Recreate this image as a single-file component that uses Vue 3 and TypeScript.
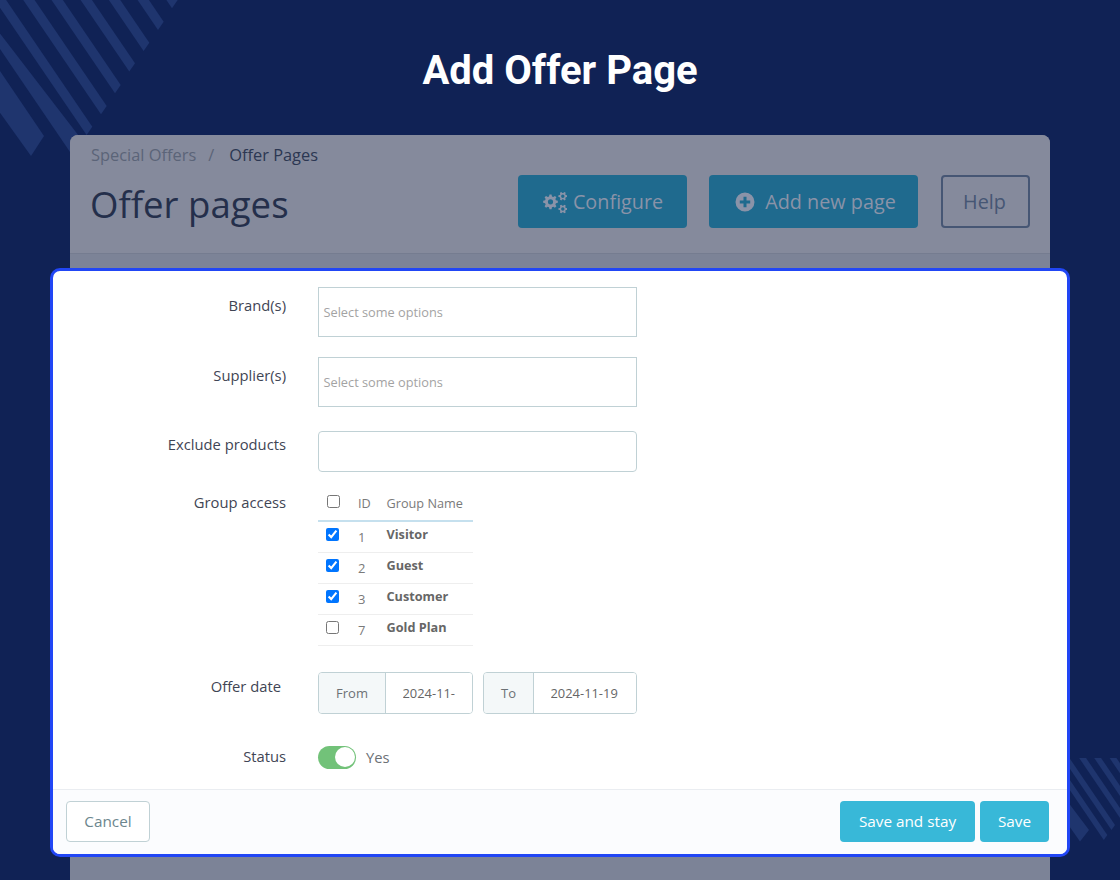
<script setup lang="ts">
interface Group { id: number; name: string; checked: boolean }

const groups: Group[] = [
  { id: 1, name: 'Visitor', checked: true },
  { id: 2, name: 'Guest', checked: true },
  { id: 3, name: 'Customer', checked: true },
  { id: 7, name: 'Gold Plan', checked: false },
]

function stripe(cx: number, cy: number, tx: number, ty: number, top: number): string {
  const s = 1.47
  const rx = cx - (cy - top) / s
  const lx = tx - (ty - top) / s
  return `${lx},${top} ${rx},${top} ${cx},${cy} ${tx},${ty}`
}

const topCorners: [number, number][] = [
  [177.7, 0], [163.7, 21.7], [149.3, 42.7], [135, 63.3], [120.7, 85], [106.7, 106], [92.3, 126.7],
]
const lowCorners: [number, number][] = [
  [1107.3, 835], [1115, 825], [1123.8, 813.5], [1131.7, 803], [1140, 792.6],
]
const stripes: string[] = [
  ...topCorners.map(([x, y]) => stripe(x, y, x - 5.7, y + 8.3, -2)),
  '-2,31 -2,46 70,152 82,140',
  '-2,68 -2,110 31,156 44,136',
  ...lowCorners.map(([x, y]) => stripe(x, y, x - 3.5, y + 5, 758)),
  '1060,791.5 1089,830 1080,841.5 1060,813',
]

function gear(cx: number, cy: number, ro: number, ri: number, hole: number, teeth: number): string {
  const pts: string[] = []
  const step = (Math.PI * 2) / teeth
  for (let i = 0; i < teeth; i++) {
    const a = i * step
    const cs: [number, number][] = [
      [ri, a - step * 0.34], [ro, a - step * 0.18], [ro, a + step * 0.18], [ri, a + step * 0.34],
    ]
    for (const [r, t] of cs) {
      pts.push(`${(cx + r * Math.cos(t)).toFixed(2)} ${(cy + r * Math.sin(t)).toFixed(2)}`)
    }
  }
  const ring = `M${pts.join('L')}Z`
  return `${ring}M${cx - hole} ${cy}a${hole} ${hole} 0 1 0 ${hole * 2} 0a${hole} ${hole} 0 1 0 ${-hole * 2} 0Z`
}

const cogs = [gear(7.5, 10.8, 7.4, 5.6, 2.6, 8), gear(19.8, 5.2, 4.5, 3.2, 1.7, 6), gear(19.8, 18, 4.5, 3.2, 1.7, 6)].join('')
</script>

<template>
  <div class="page">
    <svg class="stripes" width="1120" height="880" viewBox="0 0 1120 880" aria-hidden="true">
      <polygon v-for="(p, i) in stripes" :key="i" :points="p" class="stripe" />
    </svg>

    <h1 class="hero">Add Offer Page</h1>

    <div class="card">
      <div class="card-head">
        <div class="crumbs">
          <span class="crumb">Special Offers</span>
          <span class="sep">/</span>
          <span class="crumb-now">Offer Pages</span>
        </div>
        <div class="head-row">
          <h2 class="title">Offer pages</h2>
          <div class="actions">
            <button class="btn-dim btn-config" type="button">
              <svg class="cog" width="24" height="24" viewBox="0 0 24 24"><path :d="cogs" fill="currentColor" fill-rule="evenodd" /></svg>
              Configure
            </button>
            <button class="btn-dim btn-add" type="button">
              <svg class="plus" width="20" height="20" viewBox="0 0 20 20">
                <path d="M10 .5a9.5 9.5 0 1 0 0 19 9.5 9.5 0 0 0 0-19ZM8.5 4.8h3v3.7h3.7v3h-3.7v3.7h-3v-3.7H4.8v-3h3.7Z" fill="currentColor" fill-rule="evenodd" />
              </svg>
              Add new page
            </button>
            <button class="btn-help" type="button">Help</button>
          </div>
        </div>
      </div>
    </div>

    <div class="modal">
      <div class="body">
        <div class="row row-brand">
          <label class="label">Brand(s)</label>
          <div class="chosen">Select some options</div>
        </div>
        <div class="row row-supplier">
          <label class="label">Supplier(s)</label>
          <div class="chosen">Select some options</div>
        </div>
        <div class="row row-exclude">
          <label class="label">Exclude products</label>
          <input class="text-input" type="text" />
        </div>
        <div class="row row-group">
          <label class="label">Group access</label>
          <table class="groups">
            <thead>
              <tr>
                <th class="c-check"><input class="head-check" type="checkbox" /></th>
                <th class="c-id">ID</th>
                <th class="c-name">Group Name</th>
              </tr>
            </thead>
            <tbody>
              <tr v-for="g in groups" :key="g.id">
                <td class="c-check"><input type="checkbox" :checked="g.checked" /></td>
                <td class="c-id id-cell">{{ g.id }}</td>
                <td class="c-name name-cell">{{ g.name }}</td>
              </tr>
            </tbody>
          </table>
        </div>
        <div class="row row-date">
          <label class="label"><span class="date-label">Offer date</span></label>
          <div class="dates">
            <div class="date-group date-from">
              <span class="addon">From</span>
              <input class="date-input" type="text" value="2024-11-19" readonly />
            </div>
            <div class="date-group date-to">
              <span class="addon">To</span>
              <input class="date-input" type="text" value="2024-11-19" readonly />
            </div>
          </div>
        </div>
        <div class="row row-status">
          <label class="label">Status</label>
          <div class="status">
            <span class="switch"><span class="knob"></span></span>
            <span class="yes">Yes</span>
          </div>
        </div>
      </div>
      <div class="footer">
        <button class="btn-cancel" type="button">Cancel</button>
        <div class="save-group">
          <button class="btn-save btn-stay" type="button">Save and stay</button>
          <button class="btn-save btn-only" type="button">Save</button>
        </div>
      </div>
    </div>
  </div>
</template>

<style scoped>
.page {
  position: relative;
  height: 880px;
  overflow: hidden;
  background: #102255;
  font-family: "Open Sans", sans-serif;
}
.stripes { position: absolute; inset: 0; }
.stripe { fill: #1f356e; }

.hero {
  position: relative;
  margin: 0;
  height: 135px;
  padding-top: 45px;
  box-sizing: border-box;
  text-align: center;
  font-family: Roboto, sans-serif;
  font-weight: 700;
  font-size: 40px;
  line-height: 52px;
  color: #fff;
}

.card {
  position: relative;
  margin: 0 70px;
  height: 745px;
  background: #7c8397;
  border-radius: 8px 8px 0 0;
  overflow: hidden;
}
.card-head {
  height: 119px;
  box-sizing: border-box;
  padding: 9px 20px 0 21px;
  background: #858a9c;
  border-bottom: 1px solid #757c90;
}
.crumbs {
  display: flex;
  gap: 12px;
  font-size: 16.4px;
  line-height: 22px;
}
.crumb { color: #5b6478; }
.sep { color: #5b6478; margin-right: 3px; }
.crumb-now { color: #2c3752; }
.head-row {
  display: flex;
  justify-content: space-between;
  margin-top: 9px;
}
.title {
  margin: 0 0 0 -1px;
  font-weight: 400;
  font-size: 36.6px;
  line-height: 48px;
  color: #242f4b;
  padding-top: 5px;
}
.actions { display: flex; gap: 22px; }
.btn-dim, .btn-help {
  height: 53px;
  border-radius: 4px;
  font-family: inherit;
  font-size: 19.8px;
  font-weight: 500;
  display: flex;
  align-items: center;
  justify-content: center;
}
.btn-dim {
  border: 0;
  background: #1f6a8e;
  color: #8a93a8;
}
.btn-config { width: 169px; gap: 6px; padding: 0 0 0 1px; }
.btn-add { width: 209px; gap: 10px; padding: 0 0 0 4px; }
.cog { margin-top: 2px; }
.plus { margin-top: 1px; }
.btn-help {
  width: 89px;
  margin-left: 1px;
  padding: 0 2px 0 0;
  background: transparent;
  border: 2px solid #465674;
  color: #465674;
}

.modal {
  position: absolute;
  left: 50px;
  top: 268px;
  width: 1020px;
  height: 589px;
  box-sizing: border-box;
  border: 3px solid #2146f5;
  border-radius: 10px;
  background: #fff;
  display: flex;
  flex-direction: column;
  overflow: hidden;
}
.body { flex: 1; padding-top: 16px; }
.row {
  display: flex;
  align-items: flex-start;
  gap: 32px;
}
.label {
  width: 233px;
  flex: none;
  text-align: right;
  font-size: 14.75px;
  line-height: 20px;
  color: #3f4554;
}
.row-brand .label, .row-supplier .label { padding-top: 7.5px; }
.row-supplier { margin-top: 20px; }
.row-exclude { margin-top: 24px; }
.row-exclude .label { padding-top: 3px; }
.row-group { margin-top: 15px; }
.row-group .label { padding-top: 5px; }
.row-date { margin-top: 26px; }
.row-date .label { padding-top: 4px; }
.date-label { margin-right: 5px; }
.row-status { margin-top: 32px; }
.row-status .label { padding-top: 0; }

.chosen {
  width: 319px;
  height: 50px;
  box-sizing: border-box;
  border: 1px solid #c0d1d5;
  padding-left: 4.5px;
  display: flex;
  align-items: center;
  font-size: 12.75px;
  color: #a3a3a3;
}
.text-input {
  width: 319px;
  height: 41px;
  box-sizing: border-box;
  border: 1px solid #c0d1d5;
  border-radius: 4px;
  background: #fff;
  outline: none;
}

.groups {
  width: 155px;
  border-collapse: collapse;
  font-size: 12.7px;
}
.groups th {
  height: 34px;
  box-sizing: border-box;
  padding: 0 0 1px;
  font-weight: 400;
  color: #7a7a7a;
  text-align: left;
  border-bottom: 2px solid #c5e0ee;
}
.groups td {
  height: 31px;
  box-sizing: border-box;
  padding: 0 0 5px;
  border-bottom: 1px solid #eeeeee;
  vertical-align: middle;
}
.groups input { margin: 0 0 0 8px; display: block; }
.groups .head-check { margin: 0 0 4px 9px; }
.c-check { width: 40px; }
.c-id { width: 28px; }
.groups td.id-cell { color: #7a7a7a; padding: 0; font-size: 13px; }
.name-cell { font-weight: 700; color: #666; font-size: 12.7px; }
.c-name { padding-left: 0.5px !important; }

.dates { display: flex; gap: 10px; }
.date-group {
  display: flex;
  height: 42px;
  box-sizing: border-box;
  border: 1px solid #c0d1d5;
  border-radius: 4px;
  overflow: hidden;
}
.date-from { width: 155px; }
.date-to { width: 154px; }
.addon {
  flex: none;
  display: flex;
  align-items: center;
  justify-content: center;
  background: #f4f8f9;
  border-right: 1px solid #c0d1d5;
  font-size: 13px;
  color: #6c7175;
  box-sizing: border-box;
}
.date-from .addon { width: 67px; }
.date-to .addon { width: 50px; }
.date-input {
  flex: 1;
  min-width: 0;
  border: 0;
  outline: none;
  padding: 0 17px 0 16.5px;
  font-family: inherit;
  font-size: 12.9px;
  color: #666;
  background: #fff;
}

.status { display: flex; align-items: center; gap: 10px; }
.switch {
  width: 38px;
  height: 23px;
  border-radius: 12px;
  background: #72c279;
  display: flex;
  justify-content: flex-end;
  align-items: center;
  padding-right: 1.5px;
  box-sizing: border-box;
}
.knob {
  width: 20px;
  height: 20px;
  border-radius: 50%;
  background: #fff;
}
.yes { font-size: 14.75px; color: #6c7175; }

.footer {
  height: 65px;
  box-sizing: border-box;
  border-top: 1px solid #eaedf1;
  background: #fbfcfe;
  padding: 11px 18px 0 13px;
  display: flex;
  justify-content: space-between;
  align-items: flex-start;
}
.save-group { display: flex; gap: 5px; }
.btn-cancel, .btn-save {
  height: 41px;
  border-radius: 4px;
  font-family: inherit;
  font-size: 15.3px;
  font-weight: 500;
  padding: 0 0 2px;
}
.btn-cancel {
  width: 84px;
  background: #fff;
  border: 1px solid #c0d1d5;
  color: #6c868e;
}
.btn-save {
  border: 0;
  background: #38b8d8;
  color: #fff;
}
.btn-stay { width: 135px; }
.btn-only { width: 69px; }
</style>
